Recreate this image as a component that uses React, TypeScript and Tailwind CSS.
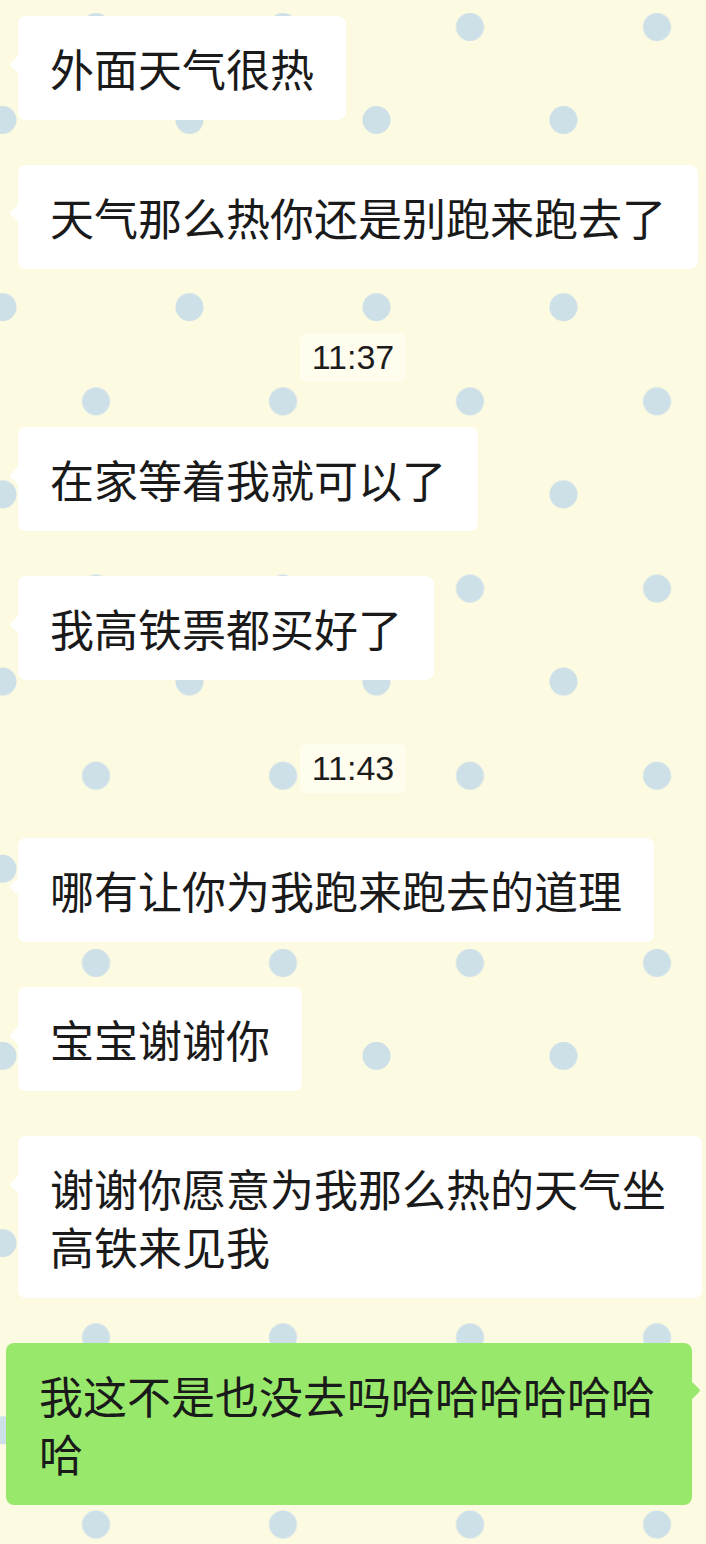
type Msg =
  | { kind: "in"; text: string }
  | { kind: "out"; text: string }
  | { kind: "time"; text: string };

const messages: Msg[] = [
  { kind: "in", text: "外面天气很热" },
  { kind: "in", text: "天气那么热你还是别跑来跑去了" },
  { kind: "time", text: "11:37" },
  { kind: "in", text: "在家等着我就可以了" },
  { kind: "in", text: "我高铁票都买好了" },
  { kind: "time", text: "11:43" },
  { kind: "in", text: "哪有让你为我跑来跑去的道理" },
  { kind: "in", text: "宝宝谢谢你" },
  { kind: "in", text: "谢谢你愿意为我那么热的天气坐高铁来见我" },
  { kind: "out", text: "我这不是也没去吗哈哈哈哈哈哈哈" },
];

const cjk =
  "font-['Noto_Sans_CJK_SC','Noto_Sans',sans-serif] text-[44px] leading-[58px] text-[#1a1a1a]";

function Incoming({ text }: { text: string }) {
  return (
    <div className="flex pl-[18px]">
      <div className="relative max-w-[684px] rounded-[8px] bg-white px-[32px] py-[23px]">
        <span className="absolute left-[-6px] top-[42px] h-[13px] w-[13px] rotate-45 rounded-[2px] bg-white" />
        <p className={`relative ${cjk}`}>{text}</p>
      </div>
    </div>
  );
}

function Outgoing({ text }: { text: string }) {
  return (
    <div className="flex justify-end pr-[14px]">
      <div className="relative max-w-[686px] rounded-[8px] bg-[#98e96b] px-[33px] py-[23px]">
        <span className="absolute right-[-6px] top-[41px] h-[13px] w-[13px] rotate-45 rounded-[2px] bg-[#98e96b]" />
        <p className={`relative ${cjk}`}>{text}</p>
      </div>
    </div>
  );
}

function TimeStamp({ text }: { text: string }) {
  return (
    <div className="mt-[19px] flex justify-center">
      <span className="flex h-[49px] items-center rounded-[6px] bg-[#fffdee] px-[12px] font-['Liberation_Sans',Arial,sans-serif] text-[34px] text-[#1c1c1c]">
        {text}
      </span>
    </div>
  );
}

export default function App() {
  return (
    <div className="h-[1544px] w-[706px] overflow-hidden bg-[#fdfae2] [background-image:radial-gradient(circle_at_center,#cde0e8_13.5px,transparent_14.5px),radial-gradient(circle_at_center,#cde0e8_13.5px,transparent_14.5px)] [background-position:2.5px_-66.6px,-91px_26.4px] [background-size:187px_187.2px]">
      <div className="flex flex-col gap-[45px] pt-[16px]">
        {messages.map((m, i) =>
          m.kind === "in" ? (
            <Incoming key={i} text={m.text} />
          ) : m.kind === "out" ? (
            <Outgoing key={i} text={m.text} />
          ) : (
            <TimeStamp key={i} text={m.text} />
          )
        )}
      </div>
    </div>
  );
}
